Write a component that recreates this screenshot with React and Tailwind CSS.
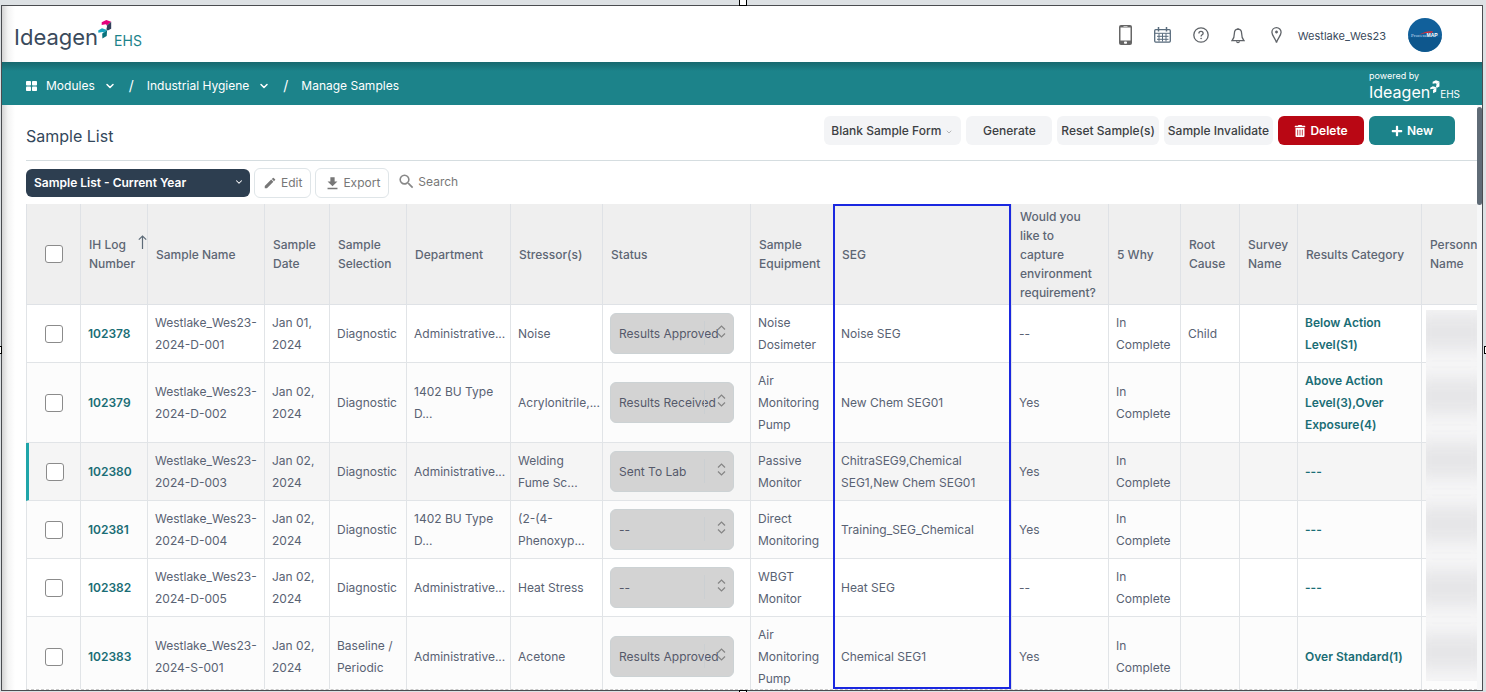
import React, { useState } from 'react';
import { FaPlus, FaTrashAlt } from 'react-icons/fa';
import { MdEdit, MdFileDownload, MdOutlineSearch } from 'react-icons/md';
import { ChevronDown } from 'lucide-react';

const columns = [
    { label: 'IH Log\nNumber', sorted: true },
    { label: 'Sample Name' },
    { label: 'Sample\nDate' },
    { label: 'Sample\nSelection' },
    { label: 'Department' },
    { label: 'Stressor(s)' },
    { label: 'Status' },
    { label: 'Sample\nEquipment' },
    { label: 'SEG' },
    { label: 'Would you\nlike to\ncapture\nenvironment\nrequirement?' },
    { label: '5 Why' },
    { label: 'Root\nCause' },
    { label: 'Survey\nName' },
    { label: 'Results Category' },
    { label: 'Personnel\nName' },
];

const samples = [
    { id: '102378', name: 'Westlake_Wes23-\n2024-D-001', date: 'Jan 01,\n2024', selection: 'Diagnostic', department: 'Administrative...', stressor: 'Noise', status: 'Results Approved', equipment: 'Noise\nDosimeter', seg: 'Noise SEG', capture: '--', cause: 'Child', category: 'Below Action\nLevel(S1)' },
    { id: '102379', name: 'Westlake_Wes23-\n2024-D-002', date: 'Jan 02,\n2024', selection: 'Diagnostic', department: '1402 BU Type\nD...', stressor: 'Acrylonitrile,...', status: 'Results Received', equipment: 'Air\nMonitoring\nPump', seg: 'New Chem SEG01', capture: 'Yes', cause: '', category: 'Above Action\nLevel(3),Over\nExposure(4)' },
    { id: '102380', name: 'Westlake_Wes23-\n2024-D-003', date: 'Jan 02,\n2024', selection: 'Diagnostic', department: 'Administrative...', stressor: 'Welding\nFume Sc...', status: 'Sent To Lab', equipment: 'Passive\nMonitor', seg: 'ChitraSEG9,Chemical\nSEG1,New Chem SEG01', capture: 'Yes', cause: '', category: '---', active: true },
    { id: '102381', name: 'Westlake_Wes23-\n2024-D-004', date: 'Jan 02,\n2024', selection: 'Diagnostic', department: '1402 BU Type\nD...', stressor: '(2-(4-\nPhenoxyp...', status: '--', equipment: 'Direct\nMonitoring', seg: 'Training_SEG_Chemical', capture: 'Yes', cause: '', category: '---' },
    { id: '102382', name: 'Westlake_Wes23-\n2024-D-005', date: 'Jan 02,\n2024', selection: 'Diagnostic', department: 'Administrative...', stressor: 'Heat Stress', status: '--', equipment: 'WBGT\nMonitor', seg: 'Heat SEG', capture: '--', cause: '', category: '---' },
    { id: '102383', name: 'Westlake_Wes23-\n2024-S-001', date: 'Jan 02,\n2024', selection: 'Baseline /\nPeriodic', department: 'Administrative...', stressor: 'Acetone', status: 'Results Approved', equipment: 'Air\nMonitoring\nPump', seg: 'Chemical SEG1', capture: 'Yes', cause: '', category: 'Over Standard(1)' },
];

const Cubes = ({ className, colors }) => (
    <svg viewBox="0 0 14 19" className={className} aria-hidden="true">
        <path d="M3.7 2.2 8.3 0l4.9 1.7L9.2 5.2 7.6 4.3l-3.9.7z" fill={colors[0]} />
        <path d="M9.2 5.2 13.2 1.7v7.1l-3.4 1.6L8.4 9.4z" fill={colors[1]} />
        <path d="M.2 10.4 4 8.3l5 1.7-3.3 2.7L4.5 12l-4.1.8z" fill={colors[2]} />
        <path d="M5.7 12.7 9.1 10l-.4 6-4.3 2.4-.2-4.8z" fill={colors[3]} />
    </svg>
);

const PhoneIcon = () => (
    <svg width="13" height="20" viewBox="0 0 13 20" aria-hidden="true">
        <rect width="13" height="20" rx="2" fill="#666" />
        <rect x="1.5" y="2.5" width="10" height="13" fill="#fff" />
        <rect x="4.5" y="1" width="4" height="0.8" fill="#ddd" />
        <rect x="5" y="16.6" width="3" height="2.2" rx="0.8" fill="#fff" />
    </svg>
);

const CalendarIcon = () => (
    <svg width="17" height="16" viewBox="0 0 17 16" fill="none" stroke="#586b7c" aria-hidden="true">
        <rect x="0.7" y="2.7" width="15.6" height="12.4" rx="1" strokeWidth="1.3" />
        <path d="M1 6.3h15M3 9.3h11.5M3 12.3h11.5M5 6.5v8M8.5 6.5v8M12 6.5v8" strokeWidth="1" />
        <path d="M4.5 0v4.5M12.5 0v4.5" strokeWidth="1.5" />
    </svg>
);

const HelpIcon = () => (
    <svg width="16" height="16" viewBox="0 0 16 16" fill="none" stroke="#5f6368" aria-hidden="true">
        <circle cx="8" cy="8" r="7.2" strokeWidth="1.3" />
        <path d="M5.9 6.4c0-2.6 4.2-2.6 4.2 0 0 1.4-2 1.5-2 3" strokeWidth="1.3" />
        <circle cx="8.1" cy="11.4" r="0.5" fill="#5f6368" strokeWidth="0.6" />
    </svg>
);

const BellIcon = () => (
    <svg width="14" height="17" viewBox="0 0 14 17" fill="none" stroke="#5f6368" strokeWidth="1.3" aria-hidden="true">
        <path d="M7 1v1.2C4.6 2.3 3.4 4.2 3.4 6.3c0 4-1 5.9-2.4 7.4h12c-1.4-1.5-2.4-3.4-2.4-7.4 0-2.1-1.2-4-3.6-4.1" />
        <path d="M5.6 14.2c.2 1.9 2.6 1.9 2.8 0" />
    </svg>
);

const PinIcon = () => (
    <svg width="11" height="17" viewBox="0 0 11 17" fill="none" stroke="#5f6368" strokeWidth="1.3" aria-hidden="true">
        <path d="M5.5 15.6C4.6 11.7.9 8.6.9 5.3a4.6 4.6 0 0 1 9.2 0c0 3.3-3.7 6.4-4.6 10.3z" />
        <circle cx="5.5" cy="5" r="1.2" fill="#5f6368" strokeWidth="0.5" />
    </svg>
);

const Avatar = () => (
    <svg width="34" height="34" viewBox="0 0 34 34" role="img" aria-label="ProcessMAP">
        <circle cx="17" cy="17" r="17" fill="#11609b" />
        <path d="M0.2 19.5a17 17 0 0 0 33.6 0z" fill="#0d5488" opacity="0.7" />
        <path d="M11 17C15 14.2 20 12.8 25 13.4l-1 1.6c-4-.6-8 .2-13 2z" fill="#e03038" />
        <text x="3" y="19.4" fill="#c9def0" fontSize="5" fontFamily="Liberation Serif, serif">Process</text>
        <text x="18.5" y="19.4" fill="#fff" fontSize="5" fontWeight="700" fontFamily="Liberation Sans, sans-serif">MAP</text>
    </svg>
);

const SortArrow = () => (
    <svg width="9" height="14" viewBox="0 0 9 14" fill="none" stroke="#5d6b78" strokeWidth="1.2" aria-hidden="true">
        <path d="M4.5 14V1M0.8 4.6 4.5 1l3.7 3.6" />
    </svg>
);

const StatusSelect = ({ value, label }) => (
    <div className="relative w-[124px]">
        <select aria-label={label} defaultValue={value} className="appearance-none w-full h-[41px] rounded-md border border-[#ccd2d4] bg-[#d3d3d3] pl-2 text-[#55596a]">
            <option>{value}</option>
        </select>
        <span className="absolute right-[29px] top-2 h-6 w-px bg-[#cbcfd2]" />
        <svg className="absolute right-2 top-3 pointer-events-none" width="9" height="13" viewBox="0 0 9 13" fill="none" stroke="#858585" strokeWidth="1.2" aria-hidden="true">
            <path d="M1 4.5 4.5 1 8 4.5M1 8.5 4.5 12 8 8.5" />
        </svg>
    </div>
);

const Handle = ({ className }) => (
    <span className={`absolute bg-white border border-black ${className}`} />
);

const toolButton = 'h-[29px] rounded-md bg-[#f3f4f6] font-medium text-[#3c4043]';
const cell = 'border-r border-b border-[#e1e4e7] pl-[7px] pt-[7px] pb-[6px] whitespace-pre leading-[22px]';
const checkbox = 'appearance-none block mx-auto size-[18px] rounded-[3px] border border-[#8b8b8b] bg-white checked:bg-[#1c838a]';

const App = () => {
    const [search, setSearch] = useState('');

    return (
        <div className="relative h-screen overflow-hidden bg-[#dde1e4] pt-[5px] pl-px pr-[3px] pb-px font-[Inter,sans-serif] text-xs text-[#596273]">
            <div className="flex h-full flex-col border border-[#4a4c50] bg-white bg-[linear-gradient(to_right,#d4d4d4,#f4f4f4_6px,#fff_13px)]">

                <header className="flex h-14 shrink-0 items-center pl-3 pr-10">
                    <a href="#home" className="flex items-end pt-1">
                        <span className="text-[22px] leading-8 text-[#3a4a5c]">Ideagen</span>
                        <Cubes className="w-[14px] h-[19px] mb-3.5" colors={['#e5007d', '#33415c', '#18a5c0', '#08727c']} />
                        <span className="pl-0.5 text-sm leading-6 text-[#1c838a]">EHS</span>
                    </a>
                    <div className="ml-auto flex items-center">
                        <div className="flex items-center gap-[22px] pt-0.5">
                            <button aria-label="Mobile app"><PhoneIcon /></button>
                            <button aria-label="Calendar"><CalendarIcon /></button>
                            <button aria-label="Help"><HelpIcon /></button>
                            <button aria-label="Notifications"><BellIcon /></button>
                            <button aria-label="Location" className="pl-1"><PinIcon /></button>
                        </div>
                        <span className="pl-4 pt-1 text-[11px] text-[#3a4a5c]">Westlake_Wes23</span>
                        <button aria-label="Profile" className="pl-[22px] pt-0.5"><Avatar /></button>
                    </div>
                </header>

                <nav className="flex h-[43px] shrink-0 items-center bg-[#1c838a] bg-[linear-gradient(to_bottom,#17686e,#1c838a_9px)] pl-6 pr-[22px] text-white">
                    <div className="flex items-center pt-1">
                        <svg width="11" height="10" viewBox="0 0 11 10" fill="#fff" aria-hidden="true">
                            <rect width="5" height="4.5" rx="0.8" />
                            <rect x="6" width="5" height="4.5" rx="0.8" />
                            <rect y="5.5" width="5" height="4.5" rx="0.8" />
                            <rect x="6" y="5.5" width="5" height="4.5" rx="0.8" />
                        </svg>
                        <a href="#modules" className="flex items-center gap-[9px] pl-[9px]">Modules <ChevronDown size={12} strokeWidth={3} /></a>
                        <span className="px-[13px] text-sm">/</span>
                        <a href="#hygiene" className="flex items-center gap-[9px]">Industrial Hygiene <ChevronDown size={12} strokeWidth={3} /></a>
                        <span className="px-[13px] text-sm">/</span>
                        <a href="#samples">Manage Samples</a>
                    </div>
                    <div className="ml-auto w-[91px] pt-1">
                        <p className="text-[9px] leading-3">powered by</p>
                        <div className="flex items-end">
                            <span className="text-base leading-5">Ideagen</span>
                            <Cubes className="w-[11px] h-[14px] mb-2 -mt-3" colors={['#fff', '#fff', '#fff', '#fff']} />
                            <span className="text-[10px] leading-4">EHS</span>
                        </div>
                    </div>
                </nav>

                <div className="flex min-h-0 flex-1">
                    <main className="flex min-w-0 flex-1 flex-col pl-6">
                        <div className="flex h-14 shrink-0 items-center border-b border-[#d5dde0] pt-[7px] pr-[22px]">
                            <h1 className="text-base text-[#33475b]">Sample List</h1>
                            <div className="ml-auto mt-1 flex gap-[5px] self-start">
                                <div className="relative">
                                    <select aria-label="Form" className={`${toolButton} appearance-none w-[137px] pl-[7px]`}>
                                        <option>Blank Sample Form</option>
                                    </select>
                                    <ChevronDown size={8} className="absolute right-2 top-3 pointer-events-none text-[#999]" />
                                </div>
                                <button className={`${toolButton} w-[86px]`}>Generate</button>
                                <button className={`${toolButton} px-1`}>Reset Sample(s)</button>
                                <button className={`${toolButton} px-1`}>Sample Invalidate</button>
                                <button className="flex h-[29px] w-[86px] items-center justify-center gap-1 rounded-md bg-[#b90714] font-semibold text-white"><FaTrashAlt size={12} /> Delete</button>
                                <button className="flex h-[29px] w-[86px] items-center justify-center gap-1 rounded-md bg-[#1c838a] font-semibold text-white"><FaPlus size={12} /> New</button>
                            </div>
                        </div>

                        <div className="flex shrink-0 items-center gap-1 pt-[7px] pb-[6px]">
                            <div className="relative">
                                <select aria-label="List view" className="appearance-none h-7 w-[224px] rounded-md bg-[#2d3e50] pl-2 font-semibold text-white">
                                    <option>Sample List - Current Year</option>
                                </select>
                                <ChevronDown size={10} strokeWidth={2.5} className="absolute right-[6px] top-2 pointer-events-none text-white" />
                            </div>
                            <button className="flex h-[30px] items-center gap-1 rounded-md border border-[#dfe5e8] bg-white px-2 text-[#777]"><MdEdit size={14} color="#777" /> Edit</button>
                            <button className="flex h-[30px] items-center gap-0.5 rounded-md border border-[#dfe5e8] bg-white px-2 text-[#777]"><MdFileDownload size={17} color="#777" /> Export</button>
                            <label className="flex items-center gap-0.5 pb-1 pl-1">
                                <MdOutlineSearch size={19} color="#888" />
                                <input aria-label="Search" value={search} onChange={(e) => setSearch(e.target.value)} placeholder="Search" className="h-6 w-40 outline-none placeholder:text-[#777]" />
                            </label>
                        </div>

                        <div className="relative min-h-0 flex-1 overflow-hidden border-b border-dashed border-[#c8c8c8]">
                            <table className="w-[1506px] table-fixed border-separate border-spacing-0 text-left">
                                <colgroup>
                                    <col className="w-[55px]" />
                                    <col className="w-[67px]" />
                                    <col className="w-[117px]" />
                                    <col className="w-[65px]" />
                                    <col className="w-[77px]" />
                                    <col className="w-[104px]" />
                                    <col className="w-[92px]" />
                                    <col className="w-[148px]" />
                                    <col className="w-[83px]" />
                                    <col className="w-[178px]" />
                                    <col className="w-[97px]" />
                                    <col className="w-[72px]" />
                                    <col className="w-[59px]" />
                                    <col className="w-[58px]" />
                                    <col className="w-[124px]" />
                                    <col className="w-[110px]" />
                                </colgroup>
                                <thead className="bg-[#efefef] text-[#5d6674]">
                                    <tr>
                                        <th className="h-[101px] border-x border-b border-[#dfe2e6]">
                                            <input type="checkbox" aria-label="Select all samples" className={checkbox} />
                                        </th>
                                        {columns.map(column => (
                                            <th key={column.label} className="border-r border-b border-[#dfe2e6] pl-2 font-medium leading-[19px] whitespace-pre">
                                                {column.sorted ? (
                                                    <div className="flex items-start gap-[3px]">
                                                        <span className="w-[46px]">{column.label}</span>
                                                        <SortArrow />
                                                    </div>
                                                ) : column.label}
                                            </th>
                                        ))}
                                    </tr>
                                </thead>
                                <tbody>
                                    {samples.map((sample, i) => (
                                        <tr key={sample.id} className={sample.active ? 'bg-[#f5f5f5]' : (i % 2 || i === 5 ? 'bg-[#fcfcfc]' : 'bg-white')}>
                                            <td className={`border-r border-b border-[#e1e4e7] ${sample.active ? 'border-l-[3px] border-l-[#1fa5a9]' : 'border-l'}`}>
                                                <input type="checkbox" aria-label={`Select ${sample.id}`} className={checkbox} />
                                            </td>
                                            <td className={cell}><a href={`#${sample.id}`} className="font-semibold text-[#1a6d75]">{sample.id}</a></td>
                                            <td className={cell}>{sample.name}</td>
                                            <td className={cell}>{sample.date}</td>
                                            <td className={cell}>{sample.selection}</td>
                                            <td className={cell}>{sample.department}</td>
                                            <td className={cell}>{sample.stressor}</td>
                                            <td className="border-r border-b border-[#e1e4e7] pl-[7px]"><StatusSelect value={sample.status} label={`Status of ${sample.id}`} /></td>
                                            <td className={cell}>{sample.equipment}</td>
                                            <td className={cell}>{sample.seg}</td>
                                            <td className={cell}>{sample.capture}</td>
                                            <td className={cell}>{'In\nComplete'}</td>
                                            <td className={cell}>{sample.cause}</td>
                                            <td className={cell}></td>
                                            <td className={cell}><a href={`#category-${sample.id}`} className="font-semibold text-[#1a6d75]">{sample.category}</a></td>
                                            <td className={cell}></td>
                                        </tr>
                                    ))}
                                </tbody>
                            </table>

                            {/* SEG column highlight */}
                            <div className="absolute inset-y-0 left-[807px] w-[178px] border-2 border-[#1a28e0] pointer-events-none" />

                            {/* Redacted personnel names */}
                            <div className="absolute right-0 top-[106px] left-[1400px] bottom-2 overflow-hidden bg-[#f6f6f7]">
                                {samples.map(sample => (
                                    <div key={sample.id} className="-mx-3 h-16 pt-1">
                                        <div className="h-9 bg-[#e6e6e8] blur-[8px]" />
                                    </div>
                                ))}
                            </div>
                        </div>
                    </main>
                    <div className="w-[5px] shrink-0 bg-[#f6f7f8] pt-0.5">
                        <div className="h-[98px] rounded-full bg-[#5f6b76]" />
                    </div>
                </div>
            </div>

            <Handle className="left-1/2 -top-0.5 size-2 -translate-x-1/2" />
            <Handle className="left-1/2 -bottom-1.5 size-2 -translate-x-1/2" />
            <Handle className="-left-1.5 top-1/2 size-2" />
            <Handle className="-right-1.5 top-1/2 size-2" />
        </div>
    );
}

export default App
